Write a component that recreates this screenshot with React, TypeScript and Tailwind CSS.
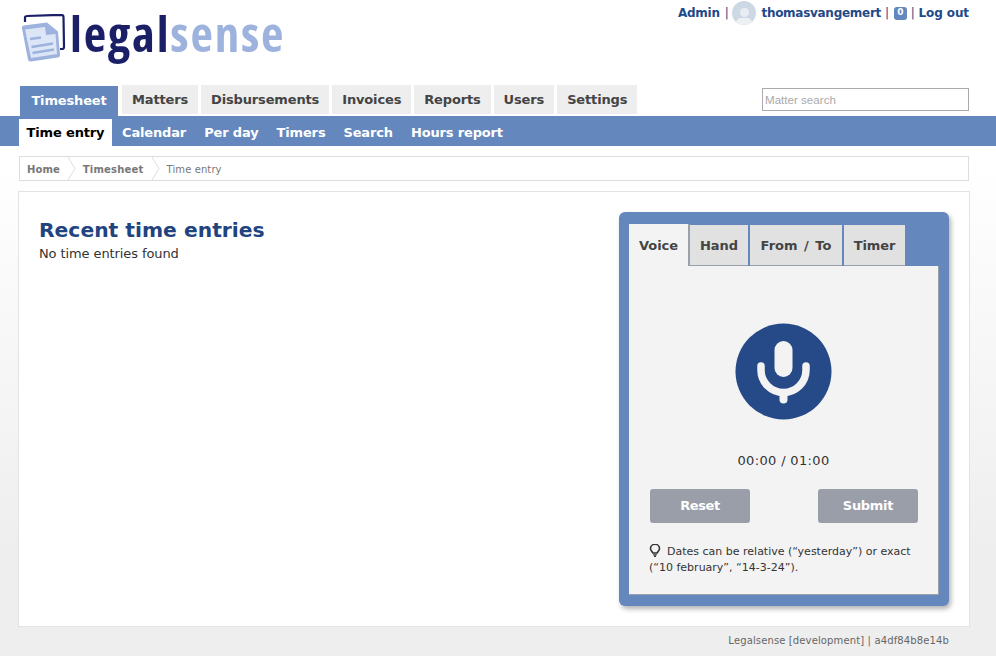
const MAIN_TABS = ["Matters", "Disbursements", "Invoices", "Reports", "Users", "Settings"];
const SUB_TABS = ["Calendar", "Per day", "Timers", "Search", "Hours report"];

function Logo() {
  return (
    <div className="flex items-start">
      <svg width="46" height="50" viewBox="0 0 46 50" fill="none" className="shrink-0">
        <path d="M5 8 L5 3.5 Q5 2 7 2 L41 0.8 Q43.5 0.8 43.5 3 L44 33 Q44 35 42 35 L40 35" stroke="#1a1f66" strokeWidth="2.2" strokeLinejoin="round" />
        <path d="M2 14.5 L2 14 Q1.5 12 3.5 11.5 L27 8.5 L38 17.5 L40 41 Q40 43 38 43.5 L11 47.5 Q8.5 47.8 8 45.5 Z" fill="#9db3de" />
        <path d="M5 15.5 L25 13 L26 21 L35.5 20 L37 40 L11 44 Z" fill="#dde6f6" />
        <path d="M25.5 9 L37.5 18.5 L26.5 19.5 Z" fill="#9db3de" />
        <path d="M10 25 L21 23.5 M11.5 33 L33 29.5 M12.5 39 L34 35.5" stroke="#9db3de" strokeWidth="2.4" />
      </svg>
      <div className="-mt-[16px] ml-[4px] font-['Open_Sans',sans-serif] text-[49px] leading-[70px] tracking-[1.8px] font-bold [font-stretch:80%] whitespace-nowrap">
        <span className="text-[#1a1f66]">legal</span>
        <span className="text-[#9db3de]">sense</span>
      </div>
    </div>
  );
}

function UserMenu() {
  return (
    <div className="flex items-center h-6 mt-[1px] text-[12px] tracking-[-0.28px] font-bold text-[#1f4a8a]">
      <span>Admin</span>
      <span className="ml-[5px] mr-[4px] font-normal">|</span>
      <span className="w-6 h-6 rounded-full bg-[#cdd8e5] overflow-hidden flex justify-center relative shrink-0">
        <span className="w-[9px] h-[9px] rounded-full bg-[#e9edf2] mt-[7px]" />
        <span className="absolute -bottom-[3px] w-[16px] h-[10px] rounded-full bg-[#eef1f4]" />
      </span>
      <span className="ml-[5px]">thomasvangemert</span>
      <span className="ml-[4px] mr-[5px] font-normal">|</span>
      <span className="w-[13px] h-[13px] rounded-[3px] bg-[#6487bd] text-white text-[9px] flex items-center justify-center">0</span>
      <span className="ml-[4px] mr-[4px] font-normal">|</span>
      <span className="tracking-[-0.1px]">Log out</span>
    </div>
  );
}

function MicButton() {
  return (
    <svg width="97" height="97" viewBox="0 0 97 97" className="block">
      <circle cx="48.5" cy="48.5" r="48" fill="#264a87" />
      <rect x="39.5" y="18" width="18" height="36" rx="9" fill="#f3f3f3" />
      <path d="M26 43 V47 A22.5 22.5 0 0 0 71 47 V43" fill="none" stroke="#f3f3f3" strokeWidth="7.5" strokeLinecap="round" />
      <rect x="44.5" y="66" width="8" height="14.5" rx="4" fill="#f3f3f3" />
    </svg>
  );
}

function BulbIcon() {
  return (
    <svg width="12" height="13" viewBox="0 0 12 13" fill="none" className="inline-block align-[-2px] mr-[6px]">
      <path d="M3.8 9 C3.6 7.8 1.5 6.8 1.5 4.5 A4.3 4 0 0 1 10.5 4.5 C10.5 6.8 8.4 7.8 8.2 9 Z" stroke="#333" strokeWidth="1.6" strokeLinejoin="round" />
      <path d="M4.2 10.8 H7.8 M5 12.3 H7" stroke="#333" strokeWidth="1.2" />
    </svg>
  );
}

function VoicePanel() {
  return (
    <div className="w-[330px] h-[394px] mt-[20px] mr-[20px] shrink-0 rounded-[6px] bg-[#6487bd] pt-[12px] px-[10px] shadow-[2px_3px_5px_rgba(0,0,0,0.3)]">
      <div className="flex h-[42px] text-[13px] font-bold text-[#444] tracking-[-0.1px]">
        <div className="w-[61px] pt-[2px] bg-[#f3f3f3] border-r-2 border-[#99a0aa] flex items-center justify-center">Voice</div>
        <div className="w-[58px] mt-[1px] pt-[1px] bg-[#e1e1e1] border-b border-[#99a0aa] flex items-center justify-center">Hand</div>
        <div className="w-[92px] ml-[2px] mt-[1px] pt-[1px] bg-[#e1e1e1] border-b border-[#99a0aa] flex items-center justify-center [word-spacing:2px] tracking-normal">From / To</div>
        <div className="w-[61px] ml-[2px] mt-[1px] pt-[1px] bg-[#e1e1e1] border-b border-[#99a0aa] flex items-center justify-center">Timer</div>
      </div>
      <div className="h-[329px] bg-[#f3f3f3] border-r border-b border-[#99a0aa] flex flex-col items-center">
        <div className="mt-[57px]">
          <MicButton />
        </div>
        <div className="mt-[33px] text-[13px] leading-[16px] tracking-[0.35px] text-[#333]">00:00 / 01:00</div>
        <div className="mt-[20px] w-full pl-[21px] pr-[20px] flex justify-between">
          <button className="w-[100px] h-[34px] rounded-[3px] bg-[#9a9ea9] text-white text-[13px] font-bold tracking-[-0.4px]">Reset</button>
          <button className="w-[100px] h-[34px] rounded-[3px] bg-[#9a9ea9] text-white text-[13px] font-bold tracking-[-0.3px]">Submit</button>
        </div>
        <div className="mt-[21px] w-full px-[20px] text-[11px] leading-[16px] text-[#333]">
          <BulbIcon />
          Dates can be relative (“yesterday”) or exact (“10 february”, “14-3-24”).
        </div>
      </div>
    </div>
  );
}

export default function App() {
  return (
    <div className="min-h-[656px] h-[656px] overflow-hidden bg-gradient-to-b from-white from-25% to-[#eeeeee] to-85% font-['DejaVu_Sans','Verdana',sans-serif]">
      <div className="h-[85px] flex justify-between pt-[14px] pl-[20px] pr-[27px]">
        <Logo />
        <div className="-mt-[14px]">
          <UserMenu />
        </div>
      </div>

      <div className="h-[31px] pl-5 pr-[27px] flex items-start">
        <div className="mt-[1px] h-[30px] w-[98px] bg-[#6487bd] text-white text-[13px] tracking-[-0.15px] font-bold flex items-center justify-center">Timesheet</div>
        <div className="flex ml-[4px] gap-[3px]">
          {MAIN_TABS.map((t) => (
            <div key={t} className="h-[29px] px-[10px] bg-[#eeeeee] text-[#444] text-[13px] tracking-[-0.15px] font-bold flex items-center">
              {t}
            </div>
          ))}
        </div>
        <input
          placeholder="Matter search"
          className="ml-auto mt-[3px] w-[207px] h-[23px] bg-white border border-[#aaa] px-[2px] text-[11.6px] font-['Liberation_Sans',sans-serif] placeholder:text-[#aaa] outline-none"
        />
      </div>

      <div className="h-[30px] bg-[#6487bd] pl-[19px] pt-[3px] flex gap-[18px] text-[13px] tracking-[-0.15px] font-bold">
        <div className="h-[27px] w-[93px] -mr-[8px] bg-white text-black flex items-center justify-center">Time entry</div>
        {SUB_TABS.map((t) => (
          <div key={t} className="h-[27px] text-white flex items-center">
            {t}
          </div>
        ))}
      </div>

      <div className="mt-[10px] ml-[19px] w-[950px] h-[25px] bg-white border border-[#ddd] flex items-center text-[10px] pt-[1px] text-[#777]">
        <span className="pl-[7px] font-bold tracking-[0.1px]">Home</span>
        <svg width="10" height="23" viewBox="0 0 10 23" fill="none" className="ml-[8px] -mt-[1px]">
          <path d="M0 0 L7 11.5 L0 23" stroke="#ddd" />
        </svg>
        <span className="ml-[5px] font-bold tracking-[0.2px]">Timesheet</span>
        <svg width="10" height="23" viewBox="0 0 10 23" fill="none" className="ml-[8px] -mt-[1px]">
          <path d="M0 0 L7 11.5 L0 23" stroke="#ddd" />
        </svg>
        <span className="ml-[5px] tracking-[0.1px]">Time entry</span>
      </div>

      <div className="mt-[10px] ml-[18px] w-[952px] h-[436px] bg-white border border-[#e3e3e3] flex justify-between">
        <div className="pl-5 pt-[25px]">
          <h1 className="text-[20.3px] leading-[27px] font-bold text-[#1f4480]">Recent time entries</h1>
          <p className="text-[13px] leading-[20px] tracking-[-0.1px] text-[#333]">No time entries found</p>
        </div>
        <VoicePanel />
      </div>

      <div className="mt-[7px] pr-[47px] text-right text-[10px] leading-[14px] tracking-[0.13px] text-[#666]">
        Legalsense [development] | a4df84b8e14b
      </div>
    </div>
  );
}
